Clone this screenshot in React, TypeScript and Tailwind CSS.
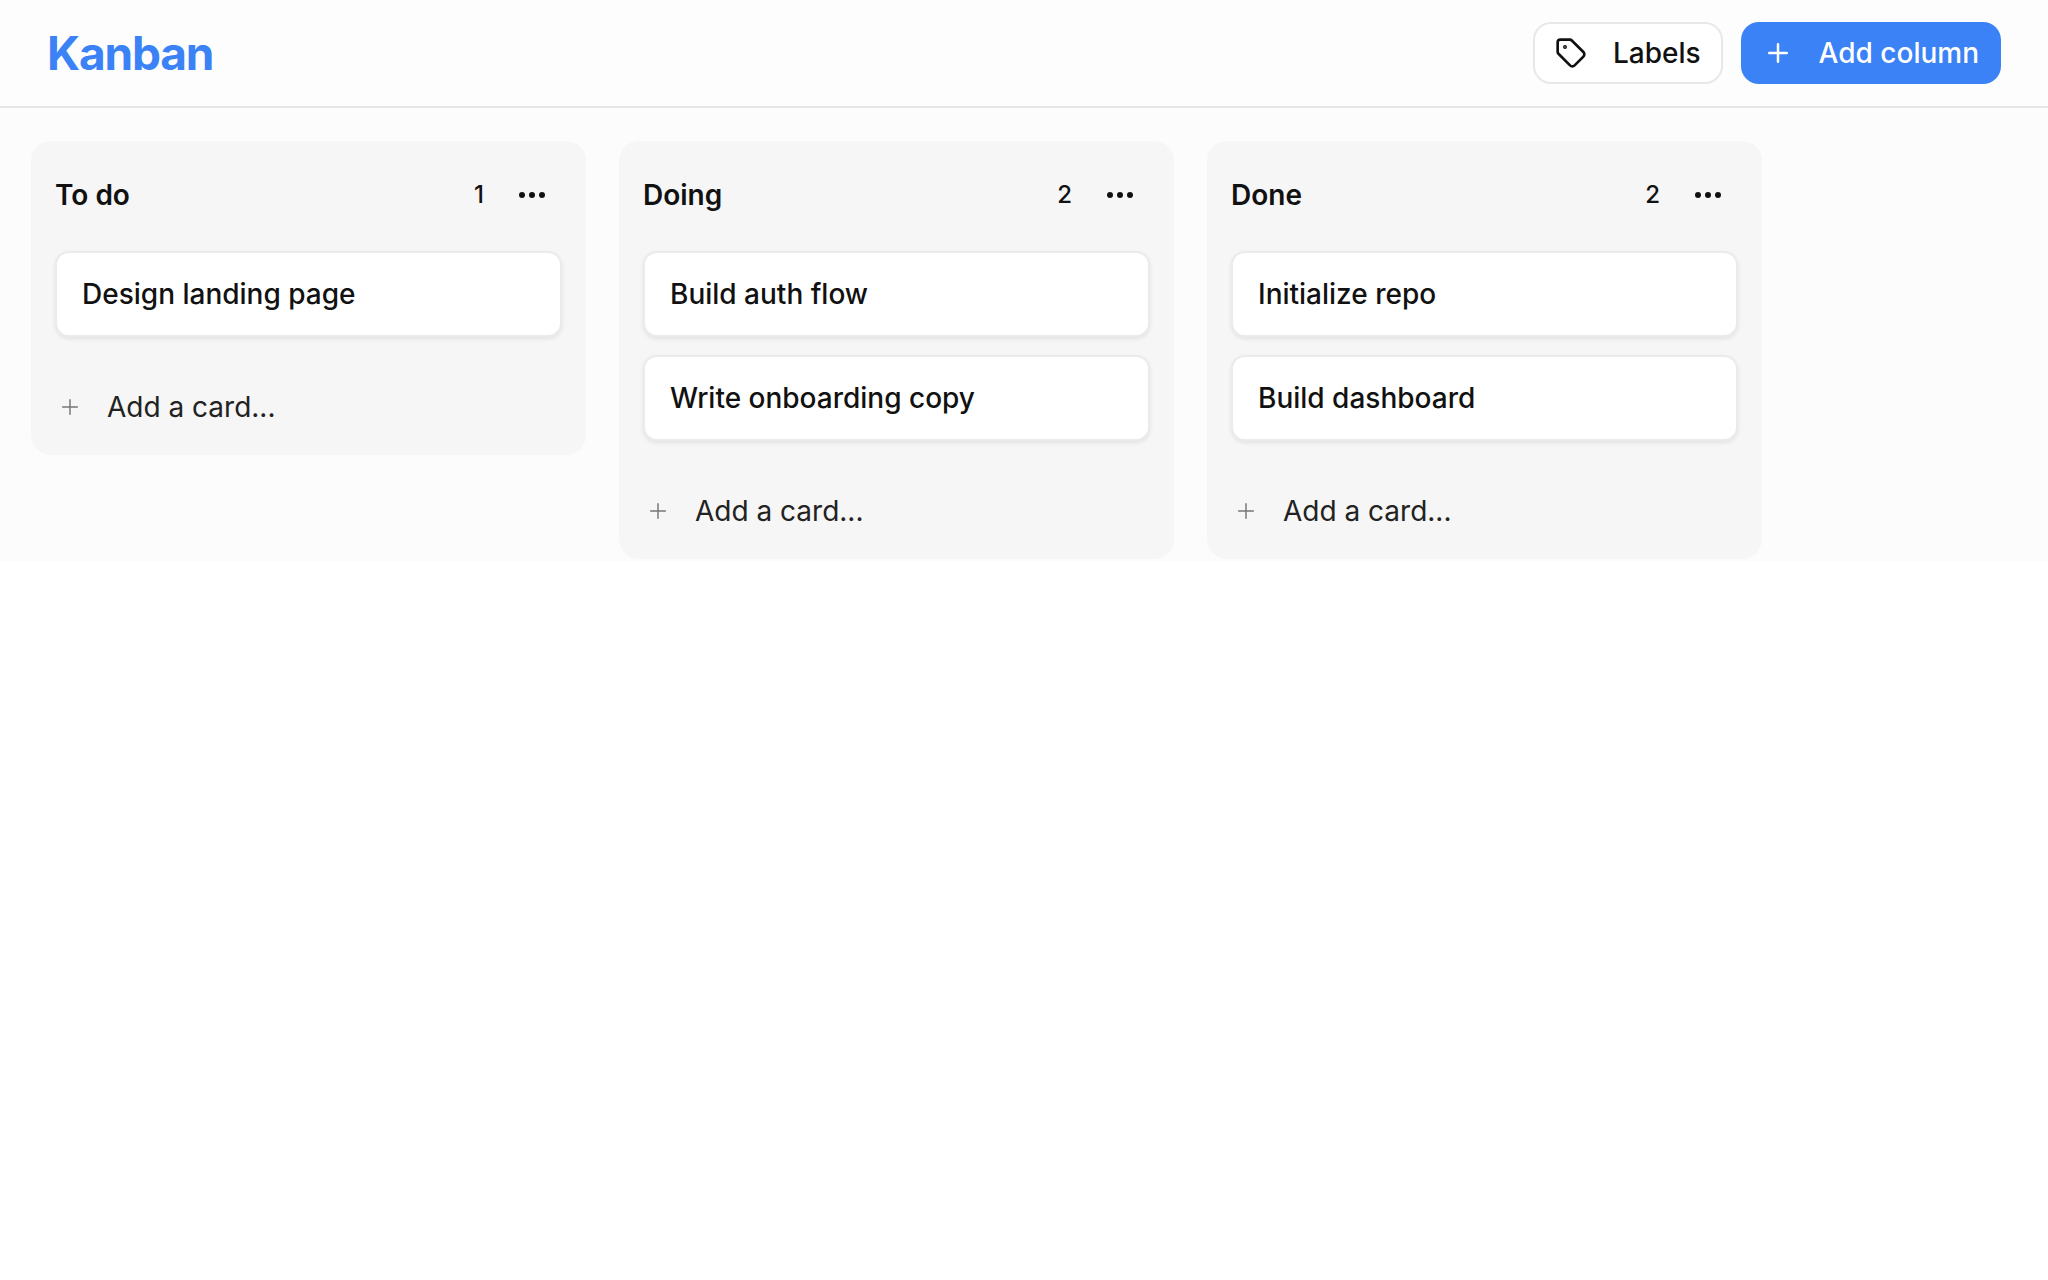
import React from "react";

const cols = [
  { title: "To do", cards: ["Design landing page"] },
  { title: "Doing", cards: ["Build auth flow", "Write onboarding copy"] },
  { title: "Done", cards: ["Initialize repo", "Build dashboard"] },
];

function Dots() {
  return (
    <svg width="28" height="8" viewBox="0 0 28 8" fill="#111">
      <circle cx="4" cy="4" r="3" />
      <circle cx="14" cy="4" r="3" />
      <circle cx="24" cy="4" r="3" />
    </svg>
  );
}

export default function App() {
  return (
    <div className="min-h-[1280px] bg-white text-[#111]" style={{ fontFamily: "Inter, 'Noto Sans', sans-serif" }}>
      <header className="h-[108px] flex items-center justify-between px-[47px] border-b-2 border-[#e5e5e5] bg-[#fdfdfd]">
        <h1 className="text-[46px] font-bold text-[#3b82f6] tracking-tight">Kanban</h1>
        <div className="flex items-center gap-[18px]">
          <button className="h-[62px] px-[20px] flex items-center gap-[26px] rounded-[18px] border-2 border-[#e8e8e8] bg-white text-[28px] font-medium">
            <svg width="32" height="32" viewBox="0 0 24 24" fill="none" stroke="#111" strokeWidth="2" strokeLinecap="round" strokeLinejoin="round">
              <path d="M12.586 2.586A2 2 0 0 0 11.172 2H4a2 2 0 0 0-2 2v7.172a2 2 0 0 0 .586 1.414l8.704 8.704a2.426 2.426 0 0 0 3.42 0l6.58-6.58a2.426 2.426 0 0 0 0-3.42z" />
              <circle cx="7.5" cy="7.5" r=".5" fill="#111" />
            </svg>
            Labels
          </button>
          <button className="h-[62px] px-[22px] flex items-center gap-[26px] rounded-[18px] bg-[#3b82f6] text-white text-[28px] font-medium">
            <svg width="30" height="30" viewBox="0 0 24 24" fill="none" stroke="#fff" strokeWidth="2" strokeLinecap="round">
              <path d="M5 12h14M12 5v14" />
            </svg>
            Add column
          </button>
        </div>
      </header>
      <main className="bg-[#fcfcfc] px-[31px] pt-[33px] pb-[2px] flex items-start gap-[33px]">
        {cols.map((c) => (
          <section key={c.title} className="w-[555px] bg-[#f6f6f6] rounded-[20px] px-[24px] pt-[34px] pb-[28px]">
            <div className="flex items-center justify-between h-[40px] pr-[16px]">
              <h2 className="text-[28px] font-semibold">{c.title}</h2>
              <div className="flex items-center gap-[34px]">
                <span className="text-[24px] font-medium">{c.cards.length}</span>
                <Dots />
              </div>
            </div>
            <div className="mt-[36px] flex flex-col gap-[18px]">
              {c.cards.map((t) => (
                <div key={t} className="h-[86px] flex items-center px-[25px] bg-white rounded-[14px] border-2 border-[#ebebeb] shadow-[0_2px_4px_rgba(0,0,0,0.08)] text-[28px] font-medium">
                  {t}
                </div>
              ))}
            </div>
            <div className="mt-[50px] flex items-center gap-[26px] pl-[4px] h-[40px]">
              <svg width="22" height="22" viewBox="0 0 24 24" fill="none" stroke="#777" strokeWidth="1.6" strokeLinecap="round">
                <path d="M4 12h16M12 4v16" />
              </svg>
              <span className="text-[28px] text-[#222]">Add a card...</span>
            </div>
          </section>
        ))}
      </main>
    </div>
  );
}
